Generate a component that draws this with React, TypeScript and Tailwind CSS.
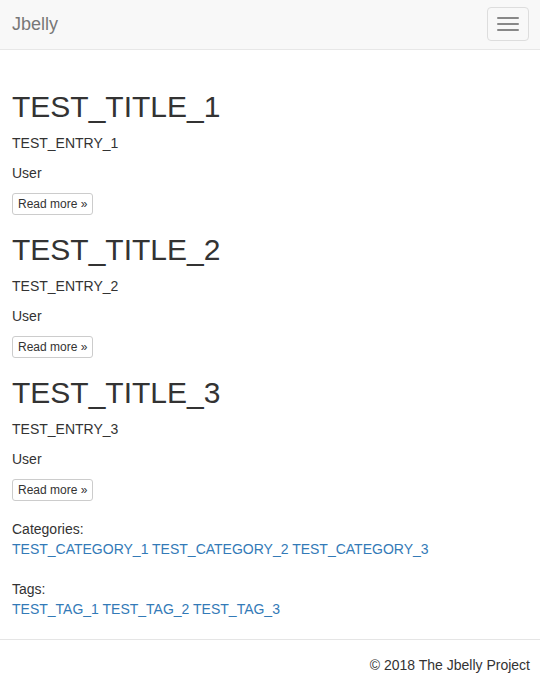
import React from "react";

const posts = [
  { title: "TEST_TITLE_1", entry: "TEST_ENTRY_1" },
  { title: "TEST_TITLE_2", entry: "TEST_ENTRY_2" },
  { title: "TEST_TITLE_3", entry: "TEST_ENTRY_3" },
];

export default function App() {
  return (
    <div
      className="min-h-[681px] bg-white text-[14px] leading-5 text-[#333]"
      style={{ fontFamily: '"Liberation Sans", Arial, Helvetica, sans-serif' }}
    >
      <nav className="flex h-[50px] items-center justify-between border-b border-[#e7e7e7] bg-[#f8f8f8] pb-[1px]">
        <a className="pl-[12px] text-[18px] leading-5 text-[#777]">Jbelly</a>
        <button className="mr-[11px] flex h-[34px] w-[42px] flex-col items-center justify-center gap-[4px] rounded-[4px] border border-[#ddd]">
          <span className="block h-[2px] w-[22px] rounded-[1px] bg-[#888]" />
          <span className="block h-[2px] w-[22px] rounded-[1px] bg-[#888]" />
          <span className="block h-[2px] w-[22px] rounded-[1px] bg-[#888]" />
        </button>
      </nav>

      <main className="flex flex-col gap-[18px] px-[12px] pt-[40px]">
        {posts.map((p) => (
          <article key={p.title} className="flex flex-col">
            <h1 className="mb-[10px] text-[30px] leading-[33px] font-normal text-[#333]">
              {p.title}
            </h1>
            <p className="mb-[10px]">{p.entry}</p>
            <p className="mb-[10px]">User</p>
            <div className="flex">
              <a className="inline-block h-[22px] rounded-[3px] border border-[#ccc] bg-white px-[5px] text-[12px] leading-[20px] text-[#333]">
                Read more »
              </a>
            </div>
          </article>
        ))}
        <div className="flex flex-col gap-[20px]">
          <div>
            <div>Categories:</div>
            <div className="text-[#337ab7]">
              <a>TEST_CATEGORY_1</a> <a>TEST_CATEGORY_2</a> <a>TEST_CATEGORY_3</a>
            </div>
          </div>
          <div>
            <div>Tags:</div>
            <div className="text-[#337ab7]">
              <a>TEST_TAG_1</a> <a>TEST_TAG_2</a> <a>TEST_TAG_3</a>
            </div>
          </div>
        </div>
      </main>

      <hr className="mt-[20px] border-0 border-t border-[#e5e5e5]" />
      <footer className="pr-[10px] pt-[15px] text-right">© 2018 The Jbelly Project</footer>
    </div>
  );
}
